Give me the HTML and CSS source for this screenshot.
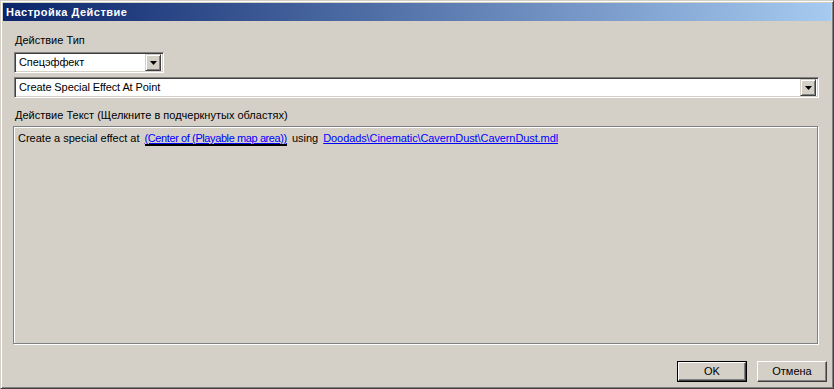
FILE: index.html
```html
<!DOCTYPE html>
<html>
<head>
<meta charset="utf-8">
<link rel="stylesheet" href="styles.css">
</head>
<body>
<div class="window">
  <div class="titlebar">Настройка Действие</div>
  <div class="content">
    <div class="label first">Действие Тип</div>
    <div class="combo small">
      <span class="combo-text">Спецэффект</span>
      <span class="drop"><svg width="7" height="4" viewBox="0 0 7 4"><path d="M0 0h7L3.5 4z" fill="#000"/></svg></span>
    </div>
    <div class="combo wide">
      <span class="combo-text">Create Special Effect At Point</span>
      <span class="drop"><svg width="7" height="4" viewBox="0 0 7 4"><path d="M0 0h7L3.5 4z" fill="#000"/></svg></span>
    </div>
    <div class="label second">Действие Текст (Щелкните в подчеркнутых областях)</div>
    <div class="textbox">
      <div class="line">Create a special effect at <span class="link focused">(Center of (Playable map area))</span> using <span class="link second-link">Doodads\Cinematic\CavernDust\CavernDust.mdl</span></div>
    </div>
    <div class="buttons">
      <div class="btn default"><span class="btn-inner">OK</span></div>
      <div class="btn"><span class="btn-inner">Отмена</span></div>
    </div>
  </div>
</div>
</body>
</html>
```

FILE: styles.css
```css
html, body {
  margin: 0;
  padding: 0;
  background: #d4d0c8;
}

body {
  font-family: "Liberation Sans", Arial, sans-serif;
  font-size: 11px;
  color: #000;
}

.window {
  width: 834px;
  height: 389px;
  box-sizing: border-box;
  border: 1px solid;
  border-color: #d4d0c8 #404040 #404040 #d4d0c8;
  box-shadow: inset 1px 1px #fff, inset -1px -1px #808080;
  padding: 2px;
  display: flex;
  flex-direction: column;
  background: #d4d0c8;
}

.titlebar {
  height: 18px;
  line-height: 18px;
  padding-left: 3px;
  background: linear-gradient(to right, #0a246a, #a6caf0);
  color: #fff;
  font-weight: bold;
  font-size: 11px;
  letter-spacing: 0.5px;
}

.content {
  flex: 1;
  display: flex;
  flex-direction: column;
  padding: 0 12px 0 11px;
}

.label {
  line-height: 13px;
  height: 13px;
  padding-left: 1px;
}

.label.first {
  margin-top: 13px;
}

.label.second {
  margin-top: 11px;
}

.combo {
  height: 21px;
  box-sizing: border-box;
  background: #fff;
  border: 1px solid;
  border-color: #808080 #fff #fff #808080;
  box-shadow: inset 1px 1px #404040, inset -1px -1px #d4d0c8;
  display: flex;
  align-items: center;
  padding: 2px;
  margin-top: 5px;
}

.combo.wide {
  margin-top: 4px;
}

.combo.small {
  width: 150px;
}

.combo-text {
  flex: 1;
  padding-left: 2px;
  line-height: 17px;
  letter-spacing: -0.1px;
}

.drop {
  width: 16px;
  height: 17px;
  box-sizing: border-box;
  background: #d4d0c8;
  border: 1px solid;
  border-color: #d4d0c8 #404040 #404040 #d4d0c8;
  box-shadow: inset 1px 1px #fff, inset -1px -1px #808080;
  display: flex;
  align-items: center;
  justify-content: center;
}

.drop svg {
  display: block;
  margin-top: 1px;
}

.textbox {
  margin-top: 4px;
  margin-left: -1px;
  margin-right: 1px;
  height: 218px;
  box-sizing: border-box;
  border: 1px solid #808080;
  box-shadow: inset 1px 1px #fff, 1px 1px 0 #fff;
  padding: 5px 4px 0 4px;
}

.line {
  line-height: 13px;
  white-space: pre;
}

.link {
  color: #0000ff;
  text-decoration: underline;
  text-decoration-color: #0000ff;
  margin: 0 2px;
}

.link.focused {
  border-bottom: 2px solid #000;
  letter-spacing: -0.4px;
}

.link.second-link {
  letter-spacing: -0.1px;
}

.buttons {
  margin-top: 17px;
  margin-right: -8px;
  display: flex;
  justify-content: flex-end;
  gap: 10px;
}

.btn {
  width: 70px;
  height: 21px;
  box-sizing: border-box;
  border: 1px solid;
  border-color: #fff #404040 #404040 #fff;
  box-shadow: inset -1px -1px #808080;
  display: flex;
}

.btn.default {
  border: 1px solid #000;
  box-shadow: none;
}

.btn-inner {
  flex: 1;
  display: flex;
  align-items: center;
  justify-content: center;
  padding-bottom: 1px;
}

.btn.default .btn-inner {
  border: 1px solid;
  border-color: #fff #404040 #404040 #fff;
  box-shadow: inset -1px -1px #808080;
}
```
